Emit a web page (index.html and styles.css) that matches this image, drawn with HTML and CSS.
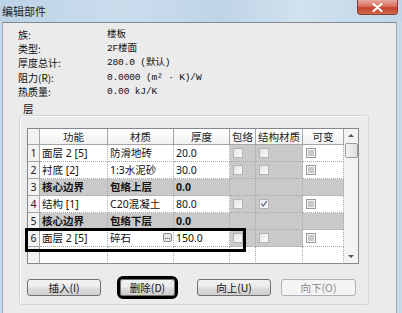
FILE: index.html
```html
<!DOCTYPE html>
<html lang="zh-CN">
<head>
<meta charset="utf-8">
<title>编辑部件</title>
<link rel="stylesheet" href="styles.css">
</head>
<body>
<div class="window">
  <div class="titlebar">
    <span class="title">编辑部件</span>
    <div class="close">
      <svg width="11" height="9" viewBox="0 0 11 9"><path d="M1.5 1 L9.5 8 M9.5 1 L1.5 8" stroke="#fff" stroke-width="2.2" stroke-linecap="round"/></svg>
    </div>
  </div>
  <div class="client">
    <div class="props">
      <div class="lbl">族:</div><div class="val">楼板</div>
      <div class="lbl">类型:</div><div class="val">2F楼面</div>
      <div class="lbl">厚度总计:</div><div class="val">280.0 (默认)</div>
      <div class="lbl">阻力(R):</div><div class="val">0.0000 (m² · K)/W</div>
      <div class="lbl">热质量:</div><div class="val">0.00 kJ/K</div>
    </div>
    <div class="legend">层</div>
    <div class="group">
      <div class="list">
        <div class="grid">
          <div class="h num"></div><div class="h">功能</div><div class="h">材质</div><div class="h">厚度</div><div class="h">包络</div><div class="h">结构材质</div><div class="h">可变</div>

          <div class="num">1</div><div class="c">面层 2 [5]</div><div class="c">防滑地砖</div><div class="c">20.0</div><div class="c g"><span class="cb"></span></div><div class="c g"><span class="cb"></span></div><div class="c"><span class="cb dis"></span></div>

          <div class="num">2</div><div class="c">衬底 [2]</div><div class="c">1:3水泥砂</div><div class="c">30.0</div><div class="c g"><span class="cb"></span></div><div class="c g"><span class="cb"></span></div><div class="c"><span class="cb dis"></span></div>

          <div class="num">3</div><div class="c g b">核心边界</div><div class="c g b">包络上层</div><div class="c g b">0.0</div><div class="c g"></div><div class="c g"></div><div class="c g"></div>

          <div class="num">4</div><div class="c">结构 [1]</div><div class="c">C20混凝土</div><div class="c">80.0</div><div class="c g"><span class="cb"></span></div><div class="c g"><span class="cb"><svg width="10" height="10" viewBox="0 0 10 10"><path d="M2 4.5 L4 7.5 L8.5 1.5" fill="none" stroke="#4a5f8a" stroke-width="1.4"/></svg></span></div><div class="c"><span class="cb dis"></span></div>

          <div class="num">5</div><div class="c g b">核心边界</div><div class="c g b">包络下层</div><div class="c g b">0.0</div><div class="c g"></div><div class="c g"></div><div class="c g"></div>

          <div class="num">6</div><div class="c">面层 2 [5]</div><div class="c mat">碎石<span class="dots">…</span></div><div class="c">150.0</div><div class="c g"><span class="cb"></span></div><div class="c g"><span class="cb"></span></div><div class="c"><span class="cb dis"></span></div>

          <div class="num"></div><div class="c"></div><div class="c"></div><div class="c"></div><div class="c"></div><div class="c"></div><div class="c"></div>
        </div>
        <div class="scrollbar">
          <div class="arrow up"></div>
          <div class="thumb"></div>
          <div class="track"></div>
          <div class="arrow down"></div>
        </div>
        <div class="mark-row"></div>
      </div>
      <div class="buttons">
        <button class="btn w74 gap19">插入(I)</button>
        <button class="btn w55 gap22 marked">删除(D)</button>
        <button class="btn w74 gap10">向上(U)</button>
        <button class="btn w75 disabled">向下(O)</button>
      </div>
    </div>
  </div>
</div>
</body>
</html>
```

FILE: styles.css
```css
* { box-sizing: border-box; }
html, body { margin: 0; padding: 0; }
body {
  width: 402px;
  height: 313px;
  overflow: hidden;
  background: #c6daea;
  font-family: "Noto Sans", "Noto Sans CJK SC", sans-serif;
  color: #111;
}
.window { width: 402px; height: 313px; display: flex; flex-direction: column; }
.titlebar {
  height: 22px;
  display: flex;
  justify-content: space-between;
  align-items: flex-start;
  background: linear-gradient(90deg, #bcd2e5 0%, #cadded 30%, #bfd4e7 55%, #d1e2ef 75%, #c0d5e7 100%);
}
.title {
  font-family: "Noto Sans CJK SC", sans-serif;
  font-size: 11px;
  line-height: 22px;
  padding-left: 2px;
  color: #1e1e1e;
}
.close {
  width: 41px;
  height: 15px;
  margin-right: 4px;
  border: 1px solid #8a3a32;
  border-top: none;
  border-radius: 0 0 4px 4px;
  background: linear-gradient(#e6a79c 0%, #d8705f 45%, #c4402b 55%, #cf6a4e 100%);
  display: flex;
  align-items: center;
  justify-content: center;
}
.client {
  flex: 1;
  margin: 0 5px 0 2px;
  background: #ebebeb;
  border-top: 1px solid #7f8c97;
  border-left: 1px solid #9aa7b2;
  border-right: 1px solid #9aa7b2;
}
.props {
  display: grid;
  grid-template-columns: 89px auto;
  grid-auto-rows: 14.2px;
  padding: 5px 0 0 15px;
  font-family: "Noto Sans CJK SC", sans-serif;
  font-size: 10px;
  line-height: 14px;
}
.lbl, .val { height: 14px; display: flex; align-items: center; }
.val { font-family: "Liberation Mono", "Noto Sans CJK SC", monospace; font-size: 9.6px; letter-spacing: -0.2px; }
.legend {
  margin: 3px 0 0 20px;
  font-family: "Noto Sans CJK SC", sans-serif;
  font-size: 10.5px;
  line-height: 13px;
}
.group {
  margin-left: 16px;
  width: 350px;
  border: 1px solid #d0d7dc;
  border-radius: 3px;
  box-shadow: inset 1px 1px 0 #fafafa;
  padding: 12px 0 8px 7px;
}
.list {
  position: relative;
  display: flex;
  width: 332px;
  height: 136px;
  border: 1px solid #828790;
  background: #fff;
}
.grid {
  display: grid;
  grid-template-columns: 12px 68px 66px 56px 26px 47px 41px;
  grid-template-rows: 16px repeat(7, 17px);
  font-size: 10.5px;
  overflow: hidden;
}
.grid > div {
  border-right: 1px dotted #a8a8a8;
  border-bottom: 1px dotted #a8a8a8;
  white-space: nowrap;
  overflow: hidden;
  display: flex;
  align-items: center;
}
.grid > .h {
  border-right: 1px solid #a6a6a6;
  border-bottom: 1px solid #a6a6a6;
  background: linear-gradient(#ffffff, #f1f1f1);
  justify-content: center;
  color: #222;
}
.grid > .num {
  border-right: 1px solid #a6a6a6;
  border-bottom: 1px solid #a6a6a6;
  background: #f2f2f2;
  justify-content: center;
  color: #222;
}
.c { padding-left: 2px; color: #111; }
.g { background: #c9c9c9; }
.b { font-weight: bold; }
.cb {
  width: 10px;
  height: 10px;
  margin-left: 1px;
  border: 1px solid #b4b4b4;
  background: linear-gradient(135deg, #e4e4e4, #fbfbfb);
  display: inline-flex;
  align-items: center;
  justify-content: center;
}
.cb.dis {
  border-color: #9a9a9a;
  background: #f4f4f4;
  box-shadow: inset 0 0 0 1px #f4f4f4, inset 0 0 0 4px #c8c8c8;
}
.mat { position: relative; }
.dots {
  position: absolute;
  right: 1px;
  top: 3px;
  width: 9px;
  height: 9px;
  border: 1px solid #8a8a8a;
  border-radius: 2px;
  background: #e8e8e8;
  font-size: 8px;
  line-height: 4px;
  text-align: center;
  color: #333;
}
.scrollbar {
  width: 14px;
  display: flex;
  flex-direction: column;
  align-items: center;
  background: #f3f3f3;
}
.arrow { width: 14px; height: 14px; position: relative; }
.arrow::after {
  content: "";
  position: absolute;
  left: 4px;
  top: 5px;
  border-left: 3px solid transparent;
  border-right: 3px solid transparent;
}
.arrow.up::after { border-bottom: 3px solid #555; }
.arrow.down::after { border-top: 3px solid #555; top: 6px; }
.thumb {
  width: 13px;
  height: 15px;
  border: 1px solid #9c9c9c;
  border-radius: 2px;
  background: linear-gradient(90deg, #f4f4f4, #dedede);
}
.track { flex: 1; }
.mark-row {
  position: absolute;
  left: -3px;
  top: 99px;
  width: 221px;
  height: 24px;
  border: 3px solid #000;
  pointer-events: none;
}
.buttons {
  display: flex;
  margin-top: 15px;
}
.btn {
  height: 17px;
  padding: 0;
  border: 1px solid #707070;
  border-radius: 3px;
  background: linear-gradient(#f2f2f2 0%, #ebebeb 48%, #dddddd 52%, #cfcfcf 100%);
  font-family: "Noto Sans CJK SC", sans-serif;
  font-size: 10.5px;
  line-height: 15px;
  color: #111;
}
.w74 { width: 74px; }
.w75 { width: 75px; }
.w55 { width: 55px; }
.gap19 { margin-right: 19px; }
.gap22 { margin-right: 22px; }
.gap10 { margin-right: 10px; }
.marked { outline: 3px solid #000; outline-offset: 0; }
.disabled {
  border-color: #adb2b5;
  background: #f4f4f4;
  color: #8a8a8a;
}
```
